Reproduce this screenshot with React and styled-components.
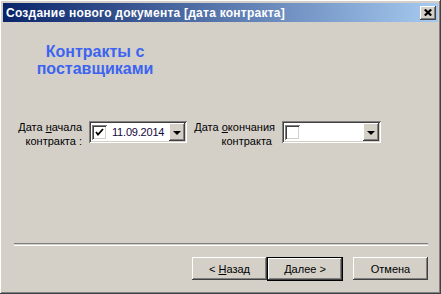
import styled, { createGlobalStyle } from "styled-components";

const Global = createGlobalStyle`
  html, body {
    margin: 0;
    padding: 0;
    background: #d4d0c8;
  }
  body {
    font-family: "Liberation Sans", Arial, sans-serif;
  }
`;

const raised = `
  box-shadow: inset -1px -1px #404040, inset 1px 1px #ffffff,
    inset -2px -2px #808080, inset 2px 2px #d4d0c8;
`;

const sunken = `
  box-shadow: inset 1px 1px #808080, inset -1px -1px #ffffff,
    inset 2px 2px #404040, inset -2px -2px #d4d0c8;
`;

const Window = styled.div`
  box-sizing: border-box;
  width: 441px;
  height: 294px;
  padding: 3px;
  background: #d4d0c8;
  display: flex;
  flex-direction: column;
  ${raised}
`;

const TitleBar = styled.div`
  height: 19px;
  flex: none;
  display: flex;
  align-items: center;
  justify-content: space-between;
  padding: 0 2px 0 3px;
  background: linear-gradient(to right, #0a246a, #a6caf0);
  color: #fff;
  font-weight: bold;
  font-size: 12px;
  letter-spacing: 0.25px;
  white-space: nowrap;
`;

const CloseButton = styled.div`
  box-sizing: border-box;
  width: 16px;
  height: 14px;
  background: #d4d0c8;
  display: flex;
  align-items: center;
  justify-content: center;
  ${raised}
`;

const Body = styled.div`
  flex: 1;
  display: flex;
  flex-direction: column;
  padding: 0 10px 10px 11px;
`;

const Heading = styled.div`
  width: 162px;
  margin-top: 21px;
  text-align: center;
  color: #3c64f0;
  font-weight: bold;
  font-size: 16px;
  line-height: 17px;
`;

const Fields = styled.div`
  display: flex;
  align-items: flex-start;
  margin-top: 44px;
  font-size: 11px;
  color: #000;
`;

const Label = styled.div`
  width: ${(p) => p.$w}px;
  text-align: right;
  line-height: 14px;
  margin-top: ${(p) => p.$top || 0}px;
  margin-right: 7px;
  white-space: nowrap;
  u {
    text-decoration: underline;
  }
`;

const Picker = styled.div`
  box-sizing: border-box;
  width: ${(p) => p.$w}px;
  height: 22px;
  background: #fff;
  padding: 2px;
  display: flex;
  align-items: center;
  margin-right: 6px;
  ${sunken}
`;

const Check = styled.div`
  box-sizing: border-box;
  width: 15px;
  height: 15px;
  margin-left: 1px;
  background: #fff;
  display: flex;
  align-items: center;
  justify-content: center;
  ${sunken}
`;

const DateText = styled.span`
  margin-left: 5px;
  font-size: 11px;
  letter-spacing: -0.2px;
  color: #14083c;
  flex: 1;
`;

const Spacer = styled.div`
  flex: 1;
`;

const DropButton = styled.div`
  box-sizing: border-box;
  width: 16px;
  height: 18px;
  margin-left: auto;
  background: #d4d0c8;
  display: flex;
  align-items: center;
  justify-content: center;
  ${raised}
  &::after {
    content: "";
    border-left: 4px solid transparent;
    border-right: 4px solid transparent;
    border-top: 4px solid #000;
    margin-top: 1px;
  }
`;

const Separator = styled.div`
  height: 1px;
  border-top: 1px solid #808080;
  border-bottom: 1px solid #ffffff;
  margin: 0 0 11px 0;
`;

const Buttons = styled.div`
  display: flex;
  justify-content: flex-end;
`;

const Button = styled.div`
  box-sizing: border-box;
  width: ${(p) => (p.$default ? 76 : 75)}px;
  height: ${(p) => (p.$default ? 24 : 23)}px;
  margin-left: ${(p) => p.$gap || 0}px;
  display: flex;
  align-items: center;
  justify-content: center;
  font-size: 11px;
  color: #000;
  background: #d4d0c8;
  ${(p) =>
    p.$default
      ? `border: 1px solid #000; box-shadow: inset -1px -1px #404040, inset 1px 1px #ffffff, inset -2px -2px #808080;`
      : raised}
`;

const CheckMark = () => (
  <svg width="9" height="9" viewBox="0 0 9 9">
    <path d="M1 4 L3 6.5 L8 1" stroke="#000" strokeWidth="1.8" fill="none" />
  </svg>
);

const CloseIcon = () => (
  <svg width="8" height="7" viewBox="0 0 8 7">
    <path d="M0.8 0.5 L7.2 6.5 M7.2 0.5 L0.8 6.5" stroke="#000" strokeWidth="2.2" />
  </svg>
);

export default function App() {
  return (
    <>
      <Global />
      <Window>
        <TitleBar>
          <span>Создание нового документа [дата контракта]</span>
          <CloseButton>
            <CloseIcon />
          </CloseButton>
        </TitleBar>
        <Body>
          <Heading>
            Контракты с
            <br />
            поставщиками
          </Heading>
          <Fields>
            <Label $w={68} $top={-1}>
              Дата <u>н</u>ачала
              <br />
              контракта :
            </Label>
            <Picker $w={98}>
              <Check>
                <CheckMark />
              </Check>
              <DateText>11.09.2014</DateText>
              <DropButton />
            </Picker>
            <Label $w={82} $top={-1}>
              Дата <u>о</u>кончания
              <br />
              контракта&nbsp;
            </Label>
            <Picker $w={99}>
              <Check />
              <DropButton />
            </Picker>
          </Fields>
          <Spacer />
          <Separator />
          <Buttons>
            <Button>
              &lt;&nbsp;<u>Н</u>азад
            </Button>
            <Button $default>
              <u>Д</u>алее&nbsp;&gt;
            </Button>
            <Button $gap={10}>Отмена</Button>
          </Buttons>
        </Body>
      </Window>
    </>
  );
}
